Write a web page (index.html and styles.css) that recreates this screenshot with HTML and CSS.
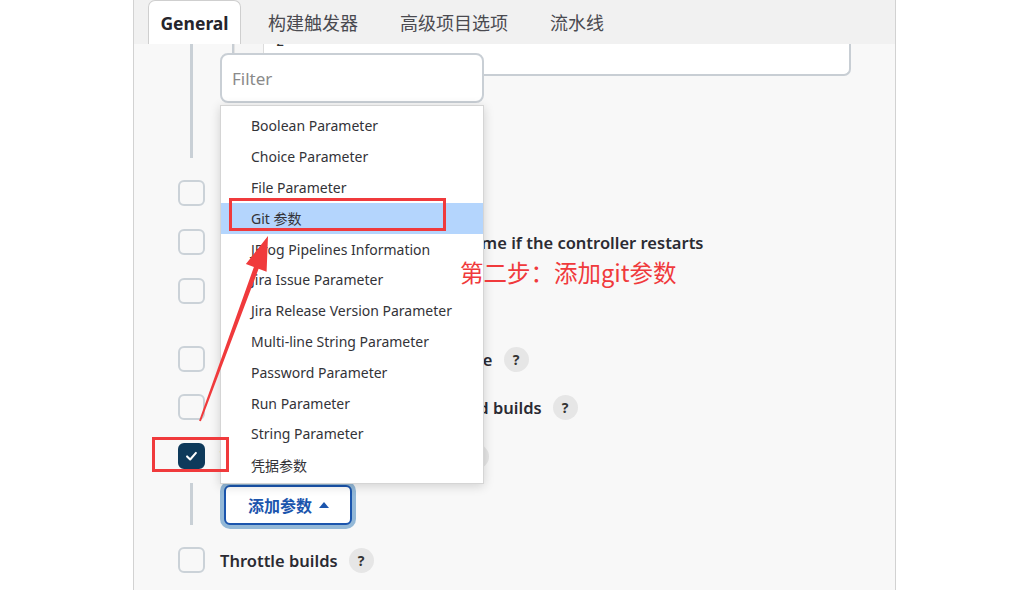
FILE: index.html
```html
<!DOCTYPE html>
<html lang="zh">
<head>
<meta charset="utf-8">
<title>General</title>
<link rel="stylesheet" href="styles.css">
</head>
<body>
<div class="panel">
  <div class="tabs">
    <div class="tab active">General</div>
    <div class="tab">构建触发器</div>
    <div class="tab">高级项目选项</div>
    <div class="tab">流水线</div>
  </div>
  <div class="content">
    <div class="nested nested-top">
      <div class="code">
        <div class="gutter"></div>
        <div class="code-text"><span class="code-line">2</span></div>
      </div>
    </div>
    <div class="opt r1"><span class="cb"></span><span class="lbl">Do not allow concurrent builds</span></div>
    <div class="opt r2"><span class="cb"></span><span class="lbl">Do not allow the pipeline to resume if the controller restarts</span></div>
    <div class="opt r3"><span class="cb"></span><span class="lbl">GitHub 项目</span></div>
    <div class="opt r4"><span class="cb"></span><span class="lbl">Pipeline speed/durability override</span><span class="help">?</span></div>
    <div class="opt r5"><span class="cb"></span><span class="lbl">Preserve stashes from completed builds</span><span class="help">?</span></div>
    <div class="opt r6"><span class="cb checked"><svg width="26" height="26" viewBox="0 0 26 26"><polyline points="8,13.5 11.5,17 18,9.5" fill="none" stroke="#fff" stroke-width="2.3" stroke-linecap="round" stroke-linejoin="round"/></svg></span><span class="lbl">This project is parameterized</span><span class="help">?</span></div>
    <div class="nested nested-btn">
      <button class="add-btn">添加参数 <svg class="caret" width="10" height="6" viewBox="0 0 10 6"><polygon points="0,6 5,0 10,6" fill="#1b55ad"/></svg></button>
    </div>
    <div class="opt r7"><span class="cb"></span><span class="lbl">Throttle builds</span><span class="help">?</span></div>
  </div>

  <div class="dropdown">
    <div class="filter">Filter</div>
    <ul class="menu">
      <li>Boolean Parameter</li>
      <li>Choice Parameter</li>
      <li>File Parameter</li>
      <li class="hl">Git 参数</li>
      <li>JFrog Pipelines Information</li>
      <li>Jira Issue Parameter</li>
      <li>Jira Release Version Parameter</li>
      <li>Multi-line String Parameter</li>
      <li>Password Parameter</li>
      <li>Run Parameter</li>
      <li>String Parameter</li>
      <li>凭据参数</li>
    </ul>
  </div>
</div>

<div class="mark mark-git"></div>
<div class="mark mark-cb"></div>
<div class="note">第二步：添加git参数</div>
<svg class="arrow" width="1030" height="590" viewBox="0 0 1030 590">
  <polygon points="199.1,420.7 253.9,267.0 245.9,264.1 268,236 266.6,271.7 258.6,268.8 200.9,421.3" fill="#f03a3c"/>
</svg>
</body>
</html>
```

FILE: styles.css
```css
html, body {
  margin: 0;
  padding: 0;
  background: #ffffff;
  font-family: "Noto Sans", "Noto Sans CJK SC", sans-serif;
  color: #2b2b33;
}

.panel {
  position: relative;
  margin-left: 133px;
  width: 763px;
  height: 590px;
  box-sizing: border-box;
  background: #f8f8f8;
  border-left: 1px solid #d2d2d2;
  border-right: 1px solid #d2d2d2;
  overflow: hidden;
}

.tabs {
  display: flex;
  height: 44px;
  background: #f1f1f1;
  padding-left: 14px;
}

.tab {
  display: flex;
  align-items: center;
  padding: 0 15px;
  margin-right: 12px;
  font-size: 18px;
  color: #4a4a50;
  font-family: "Noto Sans CJK SC", "Noto Sans", sans-serif;
}

.tab.active {
  width: 93px;
  box-sizing: border-box;
  justify-content: center;
  padding: 0;
  background: #ffffff;
  border: 1px solid #cfcfcf;
  border-bottom: none;
  border-radius: 7px 7px 0 0;
  font-family: "Noto Sans", sans-serif;
  font-weight: 700;
  font-size: 17.5px;
  color: #25252b;
}

.content {
  padding-left: 44px;
}

.nested {
  margin-left: 12px;
  border-left: 3px solid #c9d0d6;
}

.nested-top {
  height: 114px;
  padding-left: 39px;
}

.code {
  display: flex;
  width: 619px;
  height: 32px;
  box-sizing: border-box;
  background: #ffffff;
  border: 2px solid #c8ced4;
  border-top: none;
  border-radius: 0 0 7px 7px;
  overflow: hidden;
}

.gutter {
  width: 28px;
  background: #f6f6f6;
  border-right: 1px solid #dcdcdc;
  border-left: 1px solid #e4e4e4;
}

.code-text {
  padding-left: 12px;
  overflow: hidden;
}

.code-line {
  display: block;
  margin-top: -12px;
  font-family: "DejaVu Sans Mono", monospace;
  font-size: 14px;
  line-height: 18px;
  color: #333;
}

.opt {
  display: flex;
  align-items: center;
  height: 26px;
}

.r1 { margin-top: 22px; }
.r2 { margin-top: 23px; }
.r3 { margin-top: 23px; }
.r4 { margin-top: 42px; }
.r5 { margin-top: 22px; }
.r6 { margin-top: 23px; }
.r7 { margin-top: 22px; }

.cb {
  flex: none;
  width: 27px;
  height: 26px;
  box-sizing: border-box;
  border: 2px solid #cbd2d8;
  border-radius: 6px;
  margin-right: 15px;
}

.cb.checked {
  background: #0e3a5b;
  border-color: #0e3a5b;
  display: flex;
  align-items: center;
  justify-content: center;
}

.cb.checked svg {
  width: 24px;
  height: 24px;
}

.lbl {
  font-size: 16.5px;
  font-weight: 600;
  color: #2b2b33;
  white-space: nowrap;
}

.help {
  flex: none;
  width: 25px;
  height: 25px;
  margin-left: 11px;
  border-radius: 50%;
  background: #e6e6e6;
  display: flex;
  align-items: center;
  justify-content: center;
  font-size: 14px;
  font-weight: 700;
  color: #333;
}

.nested-btn {
  margin-top: 14px;
  height: 42px;
  box-sizing: border-box;
  padding-left: 31px;
  padding-top: 2px;
}

.add-btn {
  display: flex;
  align-items: center;
  gap: 7px;
  width: 128px;
  height: 40px;
  box-sizing: border-box;
  padding: 0 0 0 22px;
  background: #ffffff;
  border: 2px solid #1b55ad;
  border-radius: 6px;
  box-shadow: 0 0 0 4px #93b8d7;
  font-family: "Noto Sans CJK SC", sans-serif;
  font-size: 16px;
  font-weight: 700;
  color: #1b55ad;
}

.dropdown {
  position: absolute;
  left: 86px;
  top: 53px;
  width: 264px;
}

.filter {
  height: 50px;
  box-sizing: border-box;
  border: 2px solid #c9cfd5;
  border-radius: 8px;
  background: #ffffff;
  padding-left: 10px;
  display: flex;
  align-items: center;
  font-size: 17px;
  color: #8a8a8a;
}

.menu {
  list-style: none;
  margin: 2px 0 0 0;
  padding: 4.5px 0 5px 0;
  height: 379px;
  box-sizing: border-box;
  background: #ffffff;
  border: 1px solid #d5d5d5;
  box-shadow: 0 2px 10px rgba(0, 0, 0, 0.16);
}

.menu li {
  height: 30.8px;
  display: flex;
  align-items: center;
  padding-left: 30px;
  font-size: 14px;
  color: #333338;
  white-space: nowrap;
}

.menu li.hl {
  background: #b4d5fd;
}

.mark {
  position: absolute;
  box-sizing: border-box;
  border: 3px solid #f03a3c;
}

.mark-git {
  left: 229px;
  top: 198px;
  width: 217px;
  height: 33px;
}

.mark-cb {
  left: 152px;
  top: 437px;
  width: 77px;
  height: 35px;
}

.note {
  position: absolute;
  left: 460px;
  top: 256px;
  font-family: "Noto Sans CJK SC", sans-serif;
  font-size: 23.5px;
  line-height: 32px;
  color: #f03a3c;
}

.arrow {
  position: absolute;
  left: 0;
  top: 0;
  pointer-events: none;
}
```
